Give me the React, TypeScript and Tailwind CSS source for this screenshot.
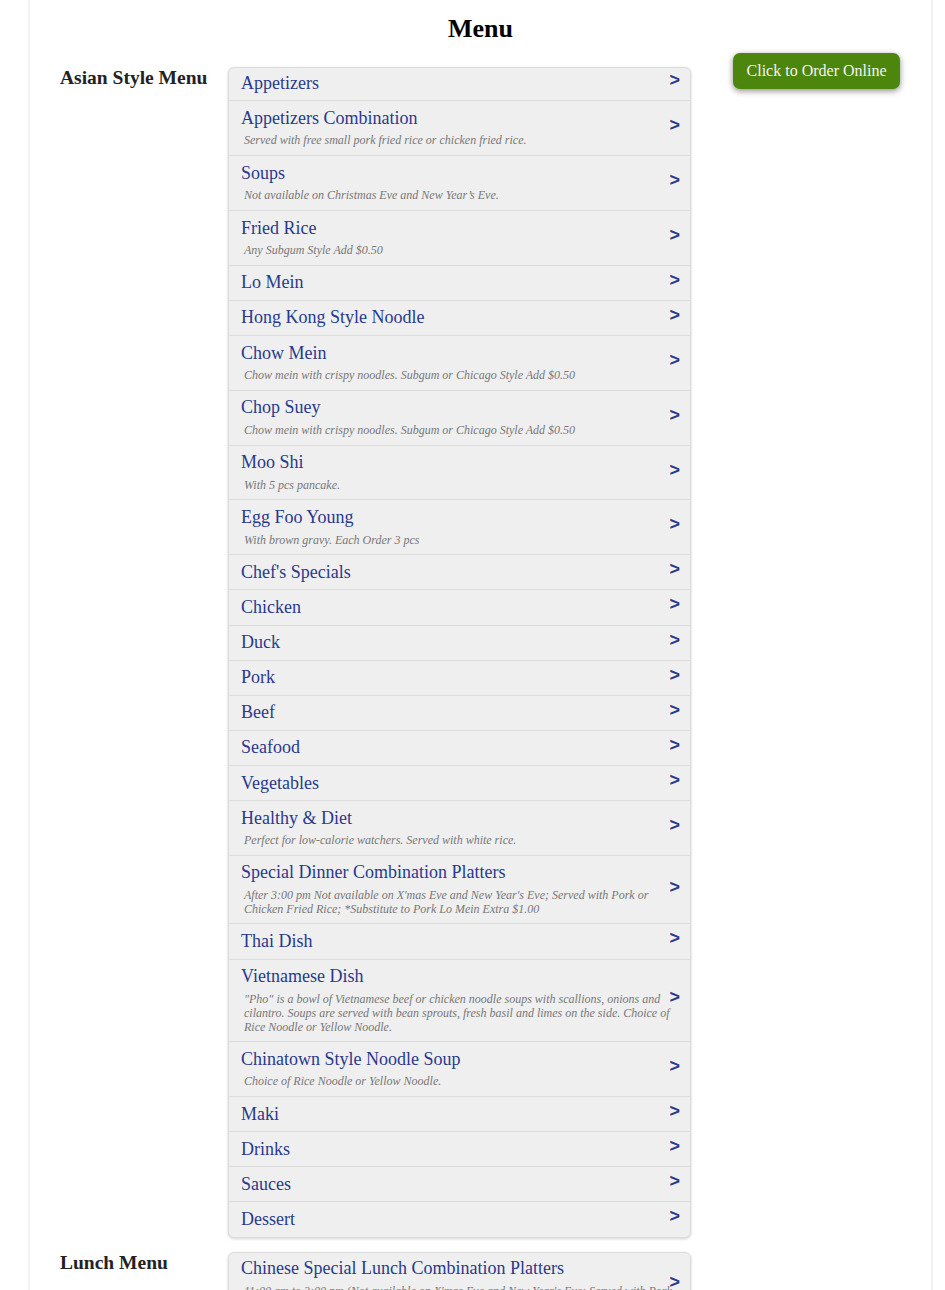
import React from "react";

type Item = { t: string; d?: string };

const asian: Item[] = [
  { t: "Appetizers" },
  { t: "Appetizers Combination", d: "Served with free small pork fried rice or chicken fried rice." },
  { t: "Soups", d: "Not available on Christmas Eve and New Year\u2019s Eve." },
  { t: "Fried Rice", d: "Any Subgum Style Add $0.50" },
  { t: "Lo Mein" },
  { t: "Hong Kong Style Noodle" },
  { t: "Chow Mein", d: "Chow mein with crispy noodles. Subgum or Chicago Style Add $0.50" },
  { t: "Chop Suey", d: "Chow mein with crispy noodles. Subgum or Chicago Style Add $0.50" },
  { t: "Moo Shi", d: "With 5 pcs pancake." },
  { t: "Egg Foo Young", d: "With brown gravy. Each Order 3 pcs" },
  { t: "Chef's Specials" },
  { t: "Chicken" },
  { t: "Duck" },
  { t: "Pork" },
  { t: "Beef" },
  { t: "Seafood" },
  { t: "Vegetables" },
  { t: "Healthy & Diet", d: "Perfect for low-calorie watchers. Served with white rice." },
  {
    t: "Special Dinner Combination Platters",
    d: "After 3:00 pm Not available on X'mas Eve and New Year's Eve; Served with Pork or Chicken Fried Rice; *Substitute to Pork Lo Mein Extra $1.00",
  },
  { t: "Thai Dish" },
  {
    t: "Vietnamese Dish",
    d: "\"Pho\" is a bowl of Vietnamese beef or chicken noodle soups with scallions, onions and cilantro. Soups are served with bean sprouts, fresh basil and limes on the side. Choice of Rice Noodle or Yellow Noodle.",
  },
  { t: "Chinatown Style Noodle Soup", d: "Choice of Rice Noodle or Yellow Noodle." },
  { t: "Maki" },
  { t: "Drinks" },
  { t: "Sauces" },
  { t: "Dessert" },
];

const lunch: Item[] = [
  {
    t: "Chinese Special Lunch Combination Platters",
    d: "11:00 am to 3:00 pm (Not available on X'mas Eve and New Year's Eve; Served with Pork or Chicken Fried Rice; *Substitute to Pork Lo Mein Extra $1.00)",
  },
  { t: "Lunch Specials" },
];

function Row({ item, first, last }: { item: Item; first: boolean; last: boolean }) {
  return (
    <div
      className={
        "flex items-center pl-[12px] pr-[10px] " +
        (first ? "pt-[4.7px] " : "pt-[6.7px] ") +
        (last ? "pb-[7.7px]" : "pb-[6.7px] border-b border-[#dcdcdc]")
      }
    >
      <div className="flex-1 min-w-0">
        <div className="text-[18px] leading-[20.7px] text-[#293a8c]">{item.t}</div>
        {item.d && (
          <div className="mt-[6px] pl-[3px] mr-[-4px] text-[12px] leading-[13.8px] italic text-[#777]">{item.d}</div>
        )}
      </div>
      <div className="w-[11px] shrink-0 -translate-y-[3.5px] font-['Liberation_Sans',sans-serif] font-bold text-[18px] leading-[16px] text-[#293a8c] text-right">
        &gt;
      </div>
    </div>
  );
}

function Section({ title, items }: { title: string; items: Item[] }) {
  return (
    <div className="flex mt-[14px]">
      <h2 className="w-[168px] shrink-0 text-[19.5px] font-bold leading-[21px] text-[#222]">{title}</h2>
      <div className="w-[463px] bg-[#efefef] border border-[#dcdcdc] rounded-[6px] shadow-[0_1px_3px_rgba(0,0,0,0.18)] overflow-hidden">
        {items.map((it, i) => (
          <Row key={i} item={it} first={i === 0} last={i === items.length - 1} />
        ))}
      </div>
    </div>
  );
}

export default function App() {
  return (
    <div className="ml-[28px] w-[905px] min-h-[1290px] border-x-2 border-[#f2f2f2] bg-white font-['Liberation_Serif',serif]">
      <h1 className="text-center text-[26px] font-bold leading-[30px] pt-[14px] pb-[9px] text-black">Menu</h1>
      <div className="flex pl-[30px] pr-[31px] pb-[40px]">
        <div className="flex flex-col">
          <Section title="Asian Style Menu" items={asian} />
          <Section title="Lunch Menu" items={lunch} />
        </div>
        <div className="ml-auto">
          <button className="h-[36px] px-[13.5px] rounded-[7px] bg-[#4c860c] text-[16px] text-[#f4f4f4] shadow-[0_2px_6px_rgba(0,0,0,0.45)] font-['Liberation_Serif',serif]">
            Click to Order Online
          </button>
        </div>
      </div>
    </div>
  );
}
